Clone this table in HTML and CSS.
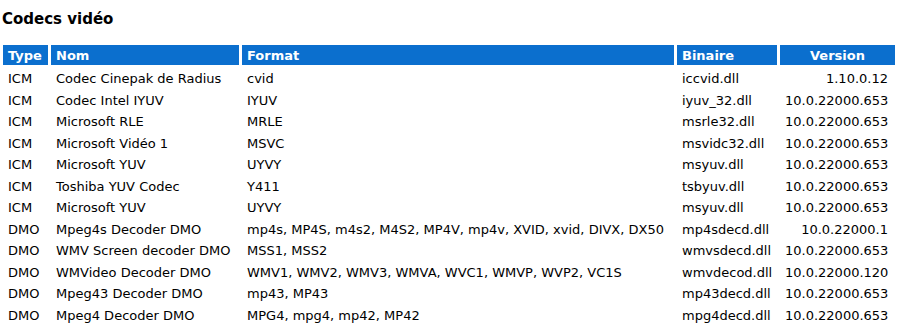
FILE: index.html
```html
<!DOCTYPE html>
<html lang="fr">
<head>
<meta charset="utf-8">
<title>Codecs vidéo</title>
<link rel="stylesheet" href="styles.css">
</head>
<body>
<h1 class="title">Codecs vidéo</h1>
<table class="codecs">
  <colgroup>
    <col class="c-type">
    <col class="c-nom">
    <col class="c-format">
    <col class="c-bin">
    <col class="c-ver">
  </colgroup>
  <thead>
    <tr><th>Type</th><th>Nom</th><th>Format</th><th>Binaire</th><th class="center">Version</th></tr>
  </thead>
  <tbody>
    <tr><td>ICM</td><td>Codec Cinepak de Radius</td><td>cvid</td><td>iccvid.dll</td><td class="num">1.10.0.12</td></tr>
    <tr><td>ICM</td><td>Codec Intel IYUV</td><td>IYUV</td><td>iyuv_32.dll</td><td class="num">10.0.22000.653</td></tr>
    <tr><td>ICM</td><td>Microsoft RLE</td><td>MRLE</td><td>msrle32.dll</td><td class="num">10.0.22000.653</td></tr>
    <tr><td>ICM</td><td>Microsoft Vidéo 1</td><td>MSVC</td><td>msvidc32.dll</td><td class="num">10.0.22000.653</td></tr>
    <tr><td>ICM</td><td>Microsoft YUV</td><td>UYVY</td><td>msyuv.dll</td><td class="num">10.0.22000.653</td></tr>
    <tr><td>ICM</td><td>Toshiba YUV Codec</td><td>Y411</td><td>tsbyuv.dll</td><td class="num">10.0.22000.653</td></tr>
    <tr><td>ICM</td><td>Microsoft YUV</td><td>UYVY</td><td>msyuv.dll</td><td class="num">10.0.22000.653</td></tr>
    <tr><td>DMO</td><td>Mpeg4s Decoder DMO</td><td>mp4s, MP4S, m4s2, M4S2, MP4V, mp4v, XVID, xvid, DIVX, DX50</td><td>mp4sdecd.dll</td><td class="num">10.0.22000.1</td></tr>
    <tr><td>DMO</td><td>WMV Screen decoder DMO</td><td>MSS1, MSS2</td><td>wmvsdecd.dll</td><td class="num">10.0.22000.653</td></tr>
    <tr><td>DMO</td><td>WMVideo Decoder DMO</td><td>WMV1, WMV2, WMV3, WMVA, WVC1, WMVP, WVP2, VC1S</td><td>wmvdecod.dll</td><td class="num">10.0.22000.120</td></tr>
    <tr><td>DMO</td><td>Mpeg43 Decoder DMO</td><td>mp43, MP43</td><td>mp43decd.dll</td><td class="num">10.0.22000.653</td></tr>
    <tr><td>DMO</td><td>Mpeg4 Decoder DMO</td><td>MPG4, mpg4, mp42, MP42</td><td>mpg4decd.dll</td><td class="num">10.0.22000.653</td></tr>
  </tbody>
</table>
</body>
</html>
```

FILE: styles.css
```css
html, body {
  margin: 0;
  padding: 0;
  background: #ffffff;
}
body {
  font-family: "DejaVu Sans", Verdana, sans-serif;
  font-size: 13px;
  color: #000000;
}
.title {
  font-family: "DejaVu Sans", Verdana, sans-serif;
  font-size: 15px;
  font-weight: bold;
  margin: 0;
  padding: 10px 0 0 2px;
  height: 32px;
  line-height: 18px;
}
.codecs {
  border-collapse: separate;
  border-spacing: 3px;
  table-layout: fixed;
  width: 898px;
}
.c-type { width: 45px; }
.c-nom { width: 188px; }
.c-format { width: 432px; }
.c-bin { width: 100px; }
.c-ver { width: 115px; }
.codecs th {
  background: #0b6fce;
  color: #ffffff;
  font-weight: bold;
  text-align: left;
  padding: 1px 5px 0;
  height: 20px;
  line-height: 19px;
  white-space: nowrap;
  box-sizing: border-box;
}
.codecs th.center { text-align: center; }
.codecs td {
  padding: 4px 5px 0;
  height: 18.5px;
  line-height: 14.5px;
  white-space: nowrap;
  vertical-align: top;
  box-sizing: border-box;
}
.codecs td.num {
  text-align: right;
  padding-right: 7px;
}
```
